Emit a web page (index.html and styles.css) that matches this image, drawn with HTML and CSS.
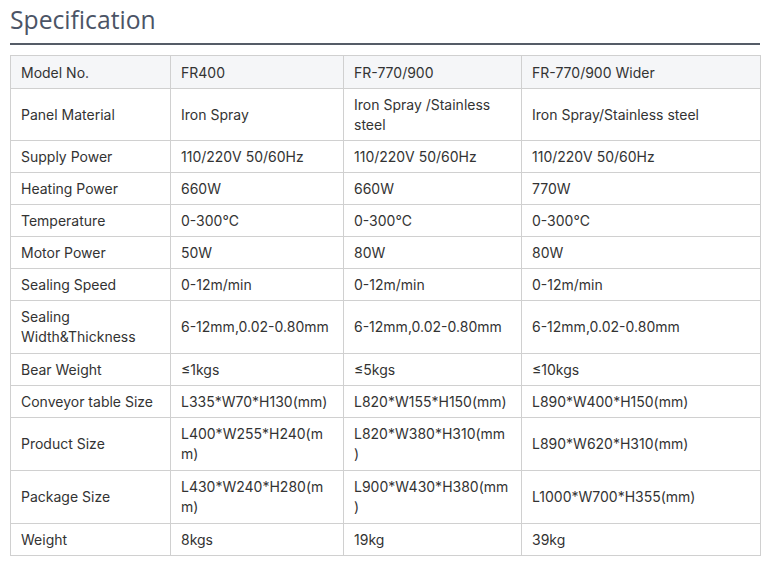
FILE: index.html
```html
<!DOCTYPE html>
<html>
<head>
<meta charset="utf-8">
<link rel="stylesheet" href="styles.css">
</head>
<body>
<div class="page">
  <h2 class="title">Specification</h2>
  <table class="spec">
    <colgroup>
      <col class="c1"><col class="c2"><col class="c3"><col class="c4">
    </colgroup>
    <tr class="head"><td>Model No.</td><td>FR400</td><td>FR-770/900</td><td>FR-770/900 Wider</td></tr>
    <tr><td>Panel Material</td><td>Iron Spray</td><td>Iron Spray /Stainless steel</td><td>Iron Spray/Stainless steel</td></tr>
    <tr><td>Supply Power</td><td>110/220V 50/60Hz</td><td>110/220V 50/60Hz</td><td>110/220V 50/60Hz</td></tr>
    <tr><td>Heating Power</td><td>660W</td><td>660W</td><td>770W</td></tr>
    <tr><td>Temperature</td><td>0-300℃</td><td>0-300℃</td><td>0-300℃</td></tr>
    <tr><td>Motor Power</td><td>50W</td><td>80W</td><td>80W</td></tr>
    <tr><td>Sealing Speed</td><td>0-12m/min</td><td>0-12m/min</td><td>0-12m/min</td></tr>
    <tr class="tall"><td>Sealing Width&amp;Thickness</td><td>6-12mm,0.02-0.80mm</td><td>6-12mm,0.02-0.80mm</td><td>6-12mm,0.02-0.80mm</td></tr>
    <tr><td>Bear Weight</td><td>≤1kgs</td><td>≤5kgs</td><td>≤10kgs</td></tr>
    <tr><td>Conveyor table Size</td><td>L335*W70*H130(mm)</td><td>L820*W155*H150(mm)</td><td>L890*W400*H150(mm)</td></tr>
    <tr class="tall"><td>Product Size</td><td>L400*W255*H240(mm)</td><td>L820*W380*H310(mm)</td><td>L890*W620*H310(mm)</td></tr>
    <tr class="tall"><td>Package Size</td><td>L430*W240*H280(mm)</td><td>L900*W430*H380(mm)</td><td>L1000*W700*H355(mm)</td></tr>
    <tr><td>Weight</td><td>8kgs</td><td>19kg</td><td>39kg</td></tr>
  </table>
</div>
</body>
</html>
```

FILE: styles.css
```css
html, body {
  margin: 0;
  padding: 0;
  background: #ffffff;
}
.page {
  padding: 0 12px 0 10px;
}
.title {
  margin: 0;
  padding: 5px 0 8px 0;
  font-family: "Open Sans", "Noto Sans", sans-serif;
  font-weight: 400;
  font-size: 24.7px;
  line-height: 30px;
  color: #4b5466;
  border-bottom: 2px solid #555c67;
}
.spec {
  margin-top: 10px;
  width: 750px;
  border-collapse: collapse;
  table-layout: fixed;
  font-family: Inter, "Liberation Sans", sans-serif;
  font-size: 14px;
  color: #333333;
}
.c1 { width: 160px; }
.c2 { width: 173px; }
.c3 { width: 178px; }
.c4 { width: 239px; }
.spec td {
  border: 1px solid #d0d0d0;
  padding: 6px 10px 5px 10px;
  line-height: 20px;
  overflow-wrap: anywhere;
  vertical-align: middle;
}
.spec td:nth-child(3) {
  padding-right: 12.5px;
}
.spec .head td {
  background: #f5f6f8;
  padding-top: 7px;
}
.spec .tall td {
  padding-bottom: 6px;
}
```
